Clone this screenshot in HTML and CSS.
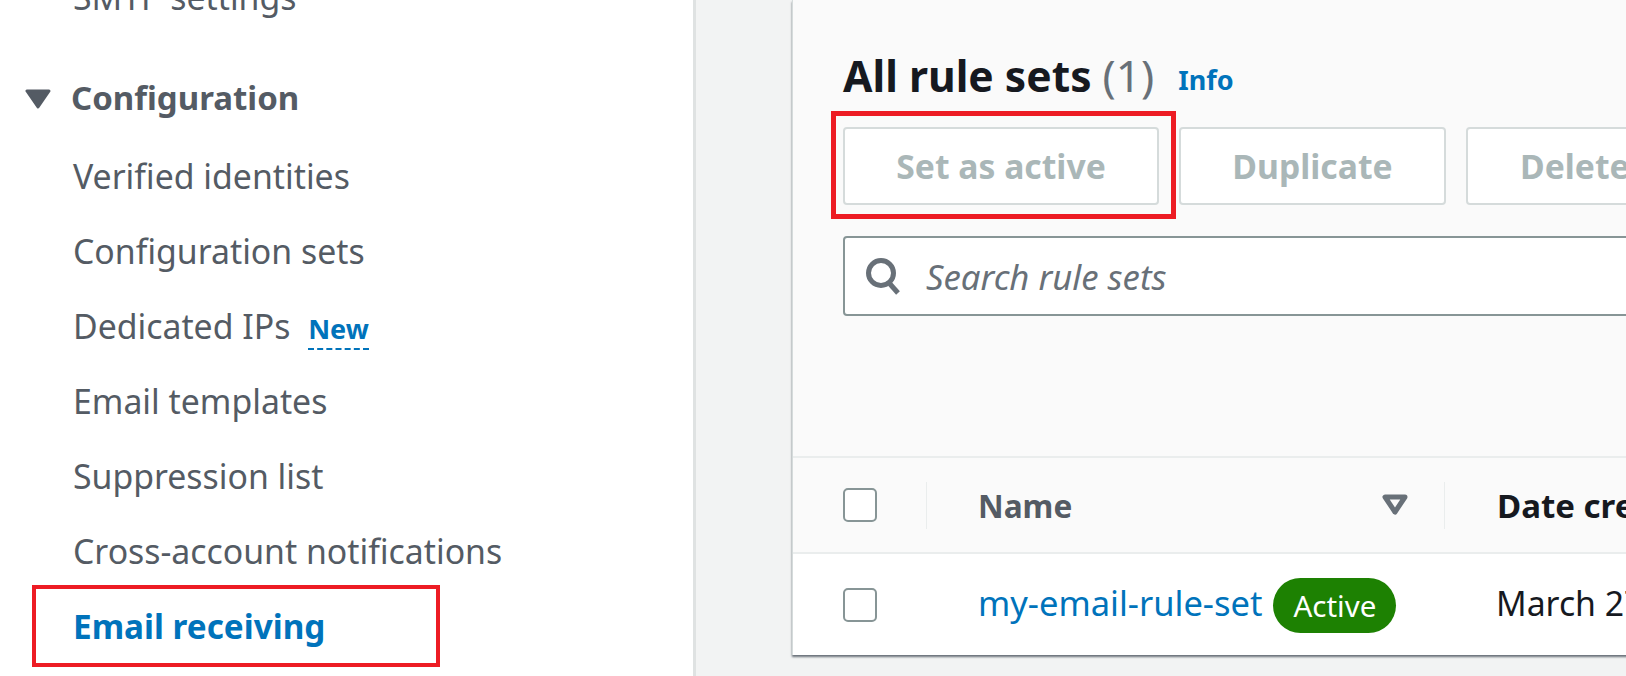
FILE: index.html
```html
<!DOCTYPE html>
<html lang="en">
<head>
    <meta charset="UTF-8">
    <title>Email receiving</title>
    <link rel="stylesheet" href="styles.css">
</head>
<body>
    <div class="page">
        <!-- left navigation -->
        <nav class="sidebar">
            <a class="nav-clipped">SMTP settings</a>
            <div class="nav-heading">
                <svg class="caret" width="26" height="20" viewBox="0 0 26 20"><path d="M2 2h22L13 18z" fill="#545b64" stroke="#545b64" stroke-width="3" stroke-linejoin="round"/></svg>
                <span>Configuration</span>
            </div>
            <a class="nav-link">Verified identities</a>
            <a class="nav-link">Configuration sets</a>
            <a class="nav-link">Dedicated IPs <span class="new-tag">New</span></a>
            <a class="nav-link">Email templates</a>
            <a class="nav-link">Suppression list</a>
            <a class="nav-link">Cross-account notifications</a>
            <a class="nav-link nav-active">
                <span class="red-box nav-box"></span>
                Email receiving
            </a>
        </nav>

        <!-- main content -->
        <main class="main">
            <div class="panel">
                <div class="panel-head">
                    <h2 class="title">All rule sets <span class="count">(1)</span> <a class="info">Info</a></h2>
                    <div class="actions">
                        <button class="btn btn-first">
                            <span class="red-box btn-box"></span>
                            Set as active
                        </button>
                        <button class="btn btn-dup">Duplicate</button>
                        <button class="btn btn-del">Delete</button>
                    </div>
                    <div class="search">
                        <svg class="search-icon" width="36" height="38" viewBox="0 0 36 38"><circle cx="16" cy="16" r="12.5" fill="none" stroke="#687078" stroke-width="5"/><path d="M25 27l8 9" stroke="#687078" stroke-width="5" fill="none"/></svg>
                        <span class="placeholder">Search rule sets</span>
                    </div>
                </div>

                <div class="table-head">
                    <div class="cell-check"><span class="checkbox"></span></div>
                    <div class="cell-name th">
                        <span>Name</span>
                        <svg width="26" height="22" viewBox="0 0 26 22"><path d="M3 3h20L13 18z" fill="none" stroke="#687078" stroke-width="5" stroke-linejoin="round"/></svg>
                    </div>
                    <div class="cell-date th-dark">Date created</div>
                </div>
                <div class="table-row">
                    <div class="cell-check"><span class="checkbox"></span></div>
                    <div class="cell-name-row">
                        <a class="rule-link">my-email-rule-set</a>
                        <span class="badge">Active</span>
                    </div>
                    <div class="cell-date cell-date-value">March 27, 2023</div>
                </div>
            </div>
        </main>
    </div>
</body>
</html>
```

FILE: styles.css
```css
html, body {
    margin: 0;
    height: 100%;
    overflow: hidden;
}
body {
    font-family: "Noto Sans", sans-serif;
    font-size: 33.8px;
    color: #16191f;
    background-color: #f2f3f3;
}
.page {
    display: flex;
    width: 1626px;
    height: 676px;
    overflow: hidden;
}

/* sidebar */
.sidebar {
    flex: none;
    width: 693px;
    height: 676px;
    overflow: hidden;
    background-color: white;
    border-right: 3px solid #dfe2e2;
    color: #545b64;
}
.nav-clipped {
    display: block;
    height: 40px;
    margin-top: -23px;
    line-height: 40px;
    padding-left: 73px;
}
.nav-heading {
    display: flex;
    align-items: center;
    height: 80px;
    margin-top: 40px;
    margin-bottom: 2px;
    padding-left: 25px;
    font-size: 33px;
    font-weight: 700;
}
.caret {
    margin-top: 4px;
    margin-right: 20px;
}
.nav-link {
    position: relative;
    display: block;
    height: 75px;
    line-height: 75px;
    padding-left: 73px;
}
.nav-active {
    font-size: 33.3px;
    font-weight: 700;
    color: #0073bb;
}
.new-tag {
    display: inline-block;
    margin-left: 9px;
    font-size: 27px;
    line-height: 38px;
    font-weight: 700;
    color: #0073bb;
    border-bottom: 2px dashed #0073bb;
}

/* the red annotation boxes */
.red-box {
    position: absolute;
    border: 4px solid #ed1c24;
    box-sizing: border-box;
}
.nav-box {
    left: 32px;
    top: -4px;
    width: 408px;
    height: 82px;
}
.btn-box {
    left: -14px;
    top: -18px;
    width: 345px;
    height: 108px;
    border-width: 5px;
}

/* main panel */
.main {
    flex: 1;
    min-width: 0;
    padding-left: 96px;
}
.panel {
    width: 1000px;
    height: 655px;
    background-color: white;
    border-left: 1px solid #d5dbdb;
    box-shadow: 0 2px 2px #687078;
}
.panel-head {
    height: 458px;
    box-sizing: border-box;
    padding: 46px 0 0 50px;
    background-color: #fafafa;
    border-bottom: 2px solid #eaeded;
}
.title {
    margin: 0;
    font-size: 42.6px;
    line-height: 58px;
    font-weight: 700;
    white-space: nowrap;
}
.count {
    font-size: 44px;
    font-weight: 400;
    color: #687078;
}
.info {
    position: relative;
    top: -2px;
    margin-left: 13px;
    font-size: 27px;
    color: #0073bb;
}
.actions {
    display: flex;
    gap: 20px;
    margin-top: 16px;
}
.btn {
    position: relative;
    flex: none;
    height: 78px;
    padding: 0;
    font-family: inherit;
    font-size: 33.7px;
    font-weight: 700;
    color: #aab7b8;
    background-color: white;
    border: 2px solid #d5dbdb;
    border-radius: 4px;
}
.btn-first {
    width: 316px;
}
.btn-dup {
    width: 267px;
}
.btn-del {
    padding: 0 52px;
}
.search {
    display: flex;
    align-items: center;
    height: 80px;
    width: 1000px;
    box-sizing: border-box;
    margin-top: 31px;
    padding-left: 20px;
    background-color: white;
    border: 2px solid #879596;
    border-radius: 4px;
}
.placeholder {
    margin-left: 25px;
    font-size: 34.7px;
    font-style: italic;
    color: #687078;
}

/* table */
.table-head, .table-row {
    display: flex;
    align-items: center;
    padding-left: 50px;
}
.table-head {
    height: 96px;
    background-color: #fafafa;
    border-bottom: 2px solid #eaeded;
    box-sizing: border-box;
}
.table-row {
    height: 101px;
    white-space: nowrap;
}
.cell-check {
    flex: none;
    width: 83px;
    height: 47px;
    display: flex;
    align-items: center;
    border-right: 1px solid #eaeded;
}
.table-row .cell-check {
    border-right: none;
    width: 84px;
}
.checkbox {
    display: block;
    width: 34px;
    height: 34px;
    box-sizing: border-box;
    background-color: white;
    border: 2px solid #879596;
    border-radius: 5px;
}
.cell-name {
    flex: none;
    display: flex;
    justify-content: space-between;
    align-items: center;
    width: 518px;
    height: 47px;
    box-sizing: border-box;
    padding: 0 36px 0 51px;
    border-right: 1px solid #eaeded;
}
.th {
    font-size: 31.6px;
    font-weight: 700;
    color: #545b64;
}
.th-dark {
    font-size: 33px;
    font-weight: 700;
}
.cell-date {
    flex: none;
    padding-left: 52px;
    white-space: nowrap;
}
.cell-date-value {
    padding-bottom: 4px;
}
.cell-name-row {
    flex: none;
    display: flex;
    align-items: center;
    width: 517px;
    box-sizing: border-box;
    padding-left: 51px;
}
.rule-link {
    padding-bottom: 4px;
    font-size: 34.5px;
    color: #0073bb;
}
.badge {
    margin-left: 11px;
    margin-top: 2px;
    padding: 0 20px;
    height: 55px;
    line-height: 55px;
    border-radius: 28px;
    font-size: 29.5px;
    color: white;
    background-color: #1d8102;
}
```
